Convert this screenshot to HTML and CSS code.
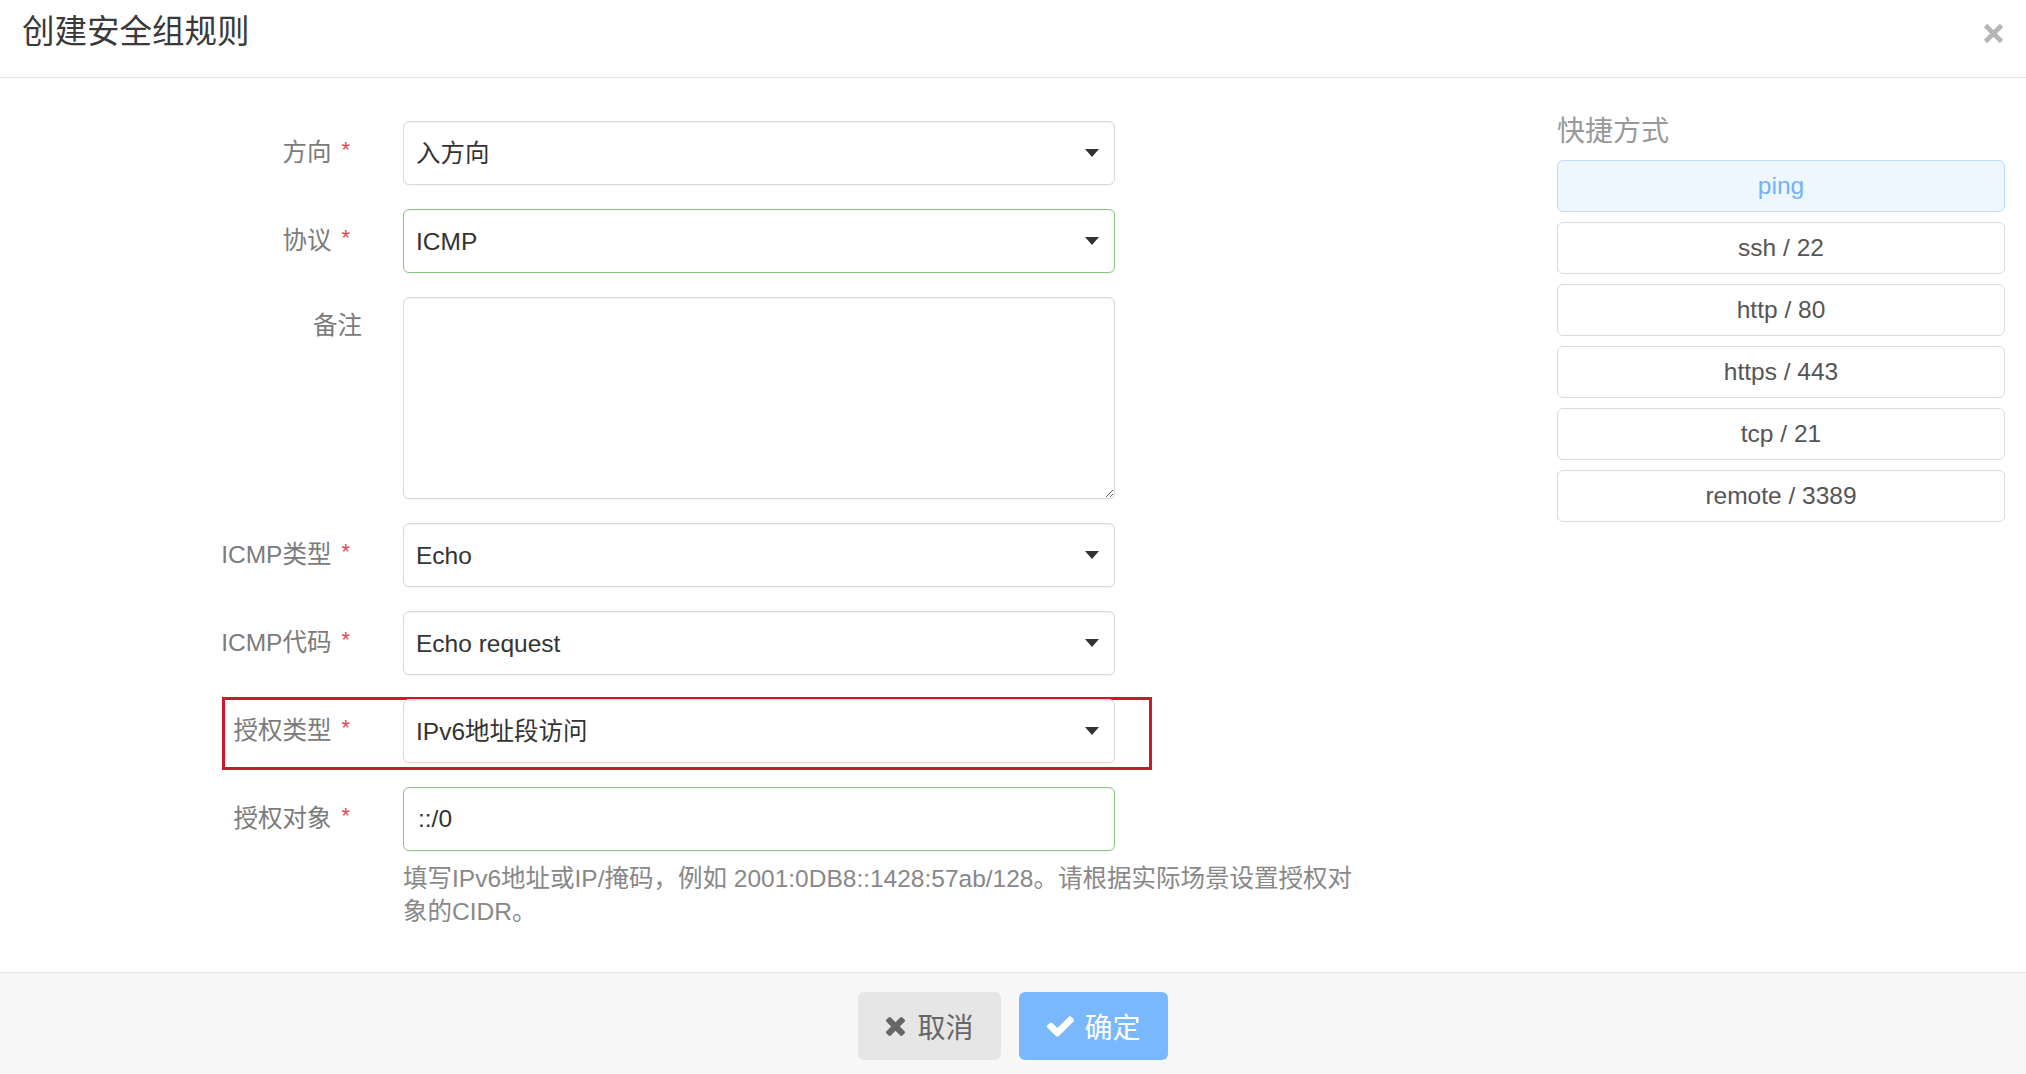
FILE: index.html
```html
<!DOCTYPE html>
<html lang="zh-CN">
<head>
    <meta charset="UTF-8">
    <meta name="viewport" content="width=device-width, initial-scale=1.0">
    <title>创建安全组规则</title>
    <link rel="stylesheet" href="styles.css">
</head>
<body>
    <div class="modal">
        <div class="modal-header">
            <h4 class="modal-title">创建安全组规则</h4>
            <button class="close" type="button">
                <svg width="21" height="21" viewBox="0 0 21 21"><path d="M2.5 2.5L18.5 18.5M18.5 2.5L2.5 18.5" stroke="#b5b5b5" stroke-width="4.6"/></svg>
            </button>
        </div>

        <div class="modal-body">
            <form class="rule-form">
                <div class="form-row">
                    <label class="form-label">方向<span class="req">*</span></label>
                    <div class="control select-wrap">
                        <select class="form-control"><option>入方向</option></select>
                    </div>
                </div>
                <div class="form-row">
                    <label class="form-label">协议<span class="req">*</span></label>
                    <div class="control select-wrap">
                        <select class="form-control ok"><option>ICMP</option></select>
                    </div>
                </div>
                <div class="form-row top">
                    <label class="form-label">备注</label>
                    <div class="control">
                        <textarea class="form-control memo"></textarea>
                    </div>
                </div>
                <div class="form-row">
                    <label class="form-label">ICMP类型<span class="req">*</span></label>
                    <div class="control select-wrap">
                        <select class="form-control"><option>Echo</option></select>
                    </div>
                </div>
                <div class="form-row">
                    <label class="form-label">ICMP代码<span class="req">*</span></label>
                    <div class="control select-wrap">
                        <select class="form-control"><option>Echo request</option></select>
                    </div>
                </div>
                <div class="form-row marked">
                    <label class="form-label">授权类型<span class="req">*</span></label>
                    <div class="control select-wrap">
                        <select class="form-control"><option>IPv6地址段访问</option></select>
                    </div>
                </div>
                <div class="form-row">
                    <label class="form-label">授权对象<span class="req">*</span></label>
                    <div class="control">
                        <input class="form-control ok cidr" type="text" value="::/0">
                        <p class="help-text">填写IPv6地址或IP/掩码，例如 2001:0DB8::1428:57ab/128。请根据实际场景设置授权对象的CIDR。</p>
                    </div>
                </div>
            </form>

            <div class="shortcut">
                <div class="shortcut-title">快捷方式</div>
                <button class="shortcut-btn active" type="button">ping</button>
                <button class="shortcut-btn" type="button">ssh / 22</button>
                <button class="shortcut-btn" type="button">http / 80</button>
                <button class="shortcut-btn" type="button">https / 443</button>
                <button class="shortcut-btn" type="button">tcp / 21</button>
                <button class="shortcut-btn" type="button">remote / 3389</button>
            </div>
        </div>

        <div class="modal-footer">
            <button class="btn btn-cancel" type="button">
                <svg width="19" height="19" viewBox="110 366 1188 1188"><path fill="#666" d="M1298 1322q0 40-28 68l-136 136q-28 28-68 28t-68-28l-294-294-294 294q-28 28-68 28t-68-28l-136-136q-28-28-28-68t28-68l294-294-294-294q-28-28-28-68t28-68l136-136q28-28 68-28t68 28l294 294 294-294q28-28 68-28t68 28l136 136q28 28 28 68t-28 68l-294 294 294 294q28 28 28 68z"/></svg>
                取消
            </button>
            <button class="btn btn-ok" type="button">
                <svg width="27" height="21" viewBox="121 334 1550 1188"><path fill="#fff" d="M1671 566q0 40-28 68l-724 724-136 136q-28 28-68 28t-68-28l-136-136-362-362q-28-28-28-68t28-68l136-136q28-28 68-28t68 28l294 295 656-657q28-28 68-28t68 28l136 136q28 28 28 68z"/></svg>
                确定
            </button>
        </div>
    </div>
</body>
</html>
```

FILE: styles.css
```css
*,
*::before,
*::after {
    box-sizing: border-box;
}

body {
    margin: 0;
    font-family: "Liberation Sans", "Noto Sans CJK SC", sans-serif;
    font-size: 24.5px;
    color: #333;
    background: #fff;
}

.modal {
    display: flex;
    flex-direction: column;
    height: 100vh;
    overflow: hidden;
}

/* 标题栏 */
.modal-header {
    display: flex;
    justify-content: space-between;
    align-items: flex-start;
    height: 78px;
    padding: 14px 22px 0 22px;
    border-bottom: 1px solid #e6e6e6;
}

.modal-title {
    margin: 0;
    font-size: 32.5px;
    line-height: 36px;
    font-weight: normal;
    color: #3a3a3a;
}

.close {
    background: transparent;
    border: none;
    padding: 0;
    margin-top: 9px;
    cursor: pointer;
    line-height: 0;
}

/* 表单区 */
.modal-body {
    flex: 1;
    display: flex;
    justify-content: space-between;
    align-items: flex-start;
    padding-right: 21px;
}

.rule-form {
    padding-top: 43px;
}

.form-row {
    display: flex;
    align-items: flex-start;
    gap: 41px;
    margin-bottom: 24px;
}

.form-label {
    width: 362px;
    text-align: right;
    line-height: 64px;
    color: #7b7b7b;
    white-space: nowrap;
}

.form-row.top .form-label {
    line-height: 58px;
}

.req {
    display: inline-block;
    color: #e0474c;
    font-size: 22px;
    margin: 0 12px 0 10px;
    vertical-align: top;
    line-height: 58px;
}

.control {
    width: 712px;
}

.form-control {
    display: block;
    width: 100%;
    height: 64px;
    padding: 0 44px 0 12px;
    font-family: inherit;
    font-size: 24.5px;
    color: #333;
    background: #fff;
    border: 1.5px solid #d9d9d9;
    border-radius: 6px;
    box-shadow: inset 0 1px 1px rgba(0, 0, 0, 0.06), 0 1px 1px rgba(0, 0, 0, 0.04);
    outline: none;
}

select.form-control {
    appearance: none;
    -webkit-appearance: none;
}

.form-control.ok {
    border-color: #8cc57f;
}

.form-control.memo {
    height: 202px;
    resize: vertical;
    padding: 10px 12px;
}

.form-control.cidr {
    padding-left: 14px;
}

.select-wrap {
    position: relative;
}

/* 下拉箭头 */
.select-wrap::after {
    content: "";
    position: absolute;
    right: 16px;
    top: 28px;
    width: 0;
    height: 0;
    box-sizing: content-box;
    border-left: 7px solid transparent;
    border-right: 7px solid transparent;
    border-top: 8px solid #333;
    pointer-events: none;
}

.help-text {
    width: 960px;
    margin: 11px 0 0 0;
    line-height: 33px;
    color: #888;
}

/* 标注红框 */
.form-row.marked {
    position: relative;
}

.form-row.marked::before {
    content: "";
    position: absolute;
    left: 222px;
    top: -2px;
    width: 930px;
    height: 73px;
    border: 3px solid #cc1a2c;
    pointer-events: none;
}

/* 快捷方式 */
.shortcut {
    width: 448px;
    padding-top: 40px;
}

.shortcut-title {
    font-size: 28px;
    line-height: 28px;
    color: #999;
    margin-bottom: 14px;
}

.shortcut-btn {
    display: block;
    width: 100%;
    height: 52px;
    margin-bottom: 10px;
    font-family: inherit;
    font-size: 24.5px;
    color: #555;
    background: #fff;
    border: 1.5px solid #dcdcdc;
    border-radius: 6px;
    cursor: pointer;
}

.shortcut-btn.active {
    color: #70b3fa;
    background: #eef6fe;
    border-color: #bcdcfa;
}

/* 底部按钮 */
.modal-footer {
    display: flex;
    justify-content: center;
    gap: 18px;
    padding: 19px 0 14px;
    background: #f7f7f7;
    border-top: 1.5px solid #e6e6e6;
}

.btn {
    display: flex;
    align-items: center;
    gap: 12px;
    height: 68px;
    padding: 0 27px 0 28px;
    font-family: inherit;
    font-size: 28px;
    border: none;
    border-radius: 6px;
    cursor: pointer;
}

.btn-cancel {
    background: #e6e6e6;
    color: #666;
}

.btn-ok {
    background: #79b8fd;
    color: #fff;
    gap: 11px;
}
```
